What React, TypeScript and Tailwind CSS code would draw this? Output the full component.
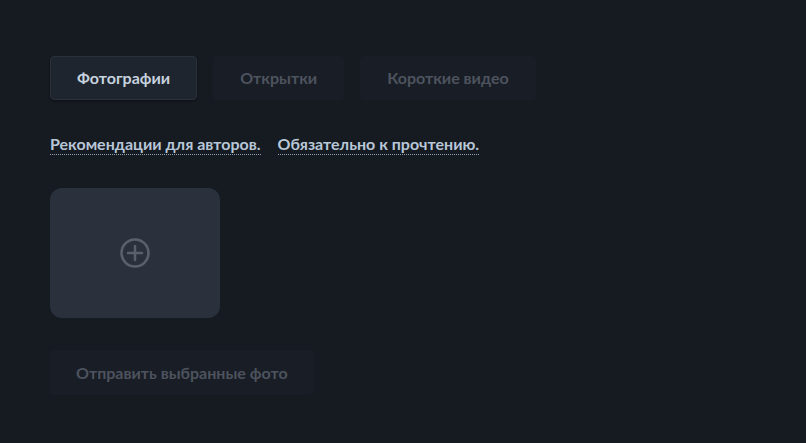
import React from "react";

export default function App() {
  return (
    <div className="w-[806px] h-[443px] bg-[#161a21] overflow-hidden" style={{ fontFamily: "Lato, 'Noto Sans', sans-serif" }}>
      <div className="pt-[56px] pl-[50px]">
        <div className="flex gap-4">
          <button className="h-[44px] px-[26px] rounded-[4px] bg-[#1f252e] border border-[#2b313b] text-[16px] font-bold text-[#c6d2df] shadow-[0_1px_2px_rgba(0,0,0,0.4)]">
            Фотографии
          </button>
          <button className="h-[44px] px-[27px] rounded-[4px] bg-[#191d25] text-[16px] font-bold text-[#4d535e]">
            Открытки
          </button>
          <button className="h-[44px] px-[27px] rounded-[4px] bg-[#191d25] text-[16px] font-bold text-[#4d535e]">
            Короткие видео
          </button>
        </div>
        <div className="mt-[34px] flex gap-[17px] text-[16px] font-bold text-[#b8c7d8]">
          <span className="border-b border-dotted border-[#8fa0b2] leading-[20px]">Рекомендации для авторов.</span>
          <span className="border-b border-dotted border-[#8fa0b2] leading-[20px]">Обязательно к прочтению.</span>
        </div>
        <div className="mt-[33px] w-[170px] h-[130px] rounded-[12px] bg-[#2a313c] flex items-center justify-center">
          <svg width="32" height="32" viewBox="0 0 32 32" fill="none" stroke="#59616d" strokeWidth="2.5">
            <circle cx="16" cy="16" r="13.5" />
            <path d="M16 9v14M9 16h14" strokeLinecap="round" />
          </svg>
        </div>
        <button className="mt-[32px] h-[45px] px-[26px] rounded-[4px] bg-[#191d25] text-[16px] font-bold text-[#4d535e]">
          Отправить выбранные фото
        </button>
      </div>
    </div>
  );
}
